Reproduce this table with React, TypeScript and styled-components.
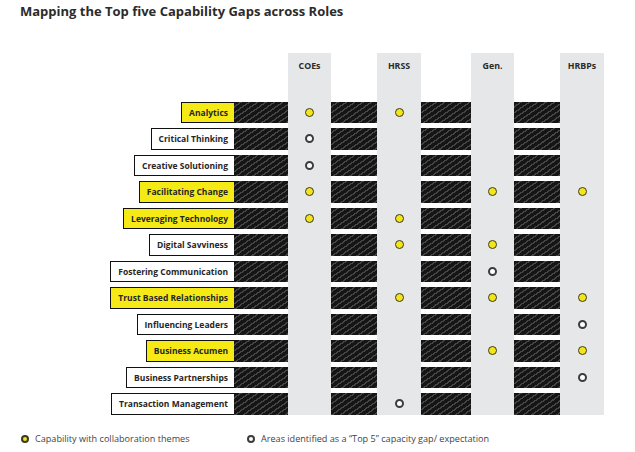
import React from "react";
import styled, { createGlobalStyle } from "styled-components";

const GlobalStyle = createGlobalStyle`
  html, body { margin: 0; padding: 0; background: #ffffff; }
  body { font-family: "Open Sans", "Liberation Sans", sans-serif; color: #222; }
`;

type Mark = "y" | "g" | null;

const ROW_H = 21.5;
const ROW_GAP = 5;
const HEAD_H = 48.5;

const roles = [
  { name: "COEs", width: 43, hatch: 54 },
  { name: "HRSS", width: 44, hatch: 46 },
  { name: "Gen.", width: 43, hatch: 50 },
  { name: "HRBPs", width: 44, hatch: 46 },
];

const rows: { label: string; hl: boolean; marks: Mark[] }[] = [
  { label: "Analytics", hl: true, marks: ["y", "y", null, null] },
  { label: "Critical Thinking", hl: false, marks: ["g", null, null, null] },
  { label: "Creative Solutioning", hl: false, marks: ["g", null, null, null] },
  { label: "Facilitating Change", hl: true, marks: ["y", null, "y", "y"] },
  { label: "Leveraging Technology", hl: true, marks: ["y", "y", null, null] },
  { label: "Digital Savviness", hl: false, marks: [null, "y", "y", null] },
  { label: "Fostering Communication", hl: false, marks: [null, null, "g", null] },
  { label: "Trust Based Relationships", hl: true, marks: [null, "y", "y", "y"] },
  { label: "Influencing Leaders", hl: false, marks: [null, null, null, "g"] },
  { label: "Business Acumen", hl: true, marks: [null, null, "y", "y"] },
  { label: "Business Partnerships", hl: false, marks: [null, null, null, "g"] },
  { label: "Transaction Management", hl: false, marks: [null, "g", null, null] },
];

const Page = styled.div`
  width: 635px;
  height: 452px;
  overflow: hidden;
`;

const Title = styled.h1`
  margin: 0;
  padding: 3px 0 0 20px;
  font-size: 13px;
  line-height: 17px;
  font-weight: 700;
  color: #2b2b2b;
`;

const Chart = styled.div`
  display: flex;
  margin-top: 33px;
`;

const Column = styled.div<{ $w: number; $grey?: boolean }>`
  width: ${(p) => p.$w}px;
  flex: none;
  display: flex;
  flex-direction: column;
  gap: ${ROW_GAP}px;
  background: ${(p) => (p.$grey ? "#e6e7e8" : "transparent")};
`;

const LabelColumn = styled(Column)`
  align-items: flex-end;
`;

const Head = styled.div`
  height: ${HEAD_H - ROW_GAP}px;
  padding-top: 8px;
  box-sizing: border-box;
  text-align: center;
  font-size: 8.8px;
  line-height: 11px;
  font-weight: 700;
  color: #2b2b2b;
`;

const LabelBox = styled.div<{ $hl: boolean }>`
  height: ${ROW_H}px;
  box-sizing: border-box;
  display: flex;
  align-items: center;
  padding: 0 6px 0 7px;
  border: 1.5px solid #111;
  border-right: none;
  background: ${(p) => (p.$hl ? "#f6ea16" : "#ffffff")};
  font-size: 8.5px;
  font-weight: 700;
  color: #262626;
  white-space: nowrap;
`;

const HatchBar = styled.div`
  height: ${ROW_H}px;
  background-color: #151515;
  background-image: repeating-linear-gradient(
    145deg,
    #151515 0px,
    #151515 3.4px,
    #454545 3.4px,
    #454545 4.8px
  );
`;

const Cell = styled.div`
  height: ${ROW_H}px;
  display: flex;
  align-items: center;
  justify-content: center;
`;

const Dot = styled.span<{ $kind: "y" | "g" }>`
  width: 9px;
  height: 9px;
  box-sizing: border-box;
  border-radius: 50%;
  background: ${(p) => (p.$kind === "y" ? "#f2e51c" : "#ffffff")};
  border: ${(p) => (p.$kind === "y" ? "1.6px solid #3a3a22" : "2px solid #3c3c3c")};
`;

const Legend = styled.div`
  display: flex;
  align-items: center;
  margin-top: 18px;
  padding-left: 21px;
`;

const LegendItem = styled.div<{ $w?: number }>`
  display: flex;
  align-items: center;
  gap: 6px;
  width: ${(p) => (p.$w ? `${p.$w}px` : "auto")};
  font-size: 9.1px;
  line-height: 12px;
  color: #3f3f3f;
`;

const LegendDot = styled(Dot)`
  width: 8px;
  height: 8px;
  border-width: 2px;
`;

export default function App() {
  return (
    <Page>
      <GlobalStyle />
      <Title>Mapping the Top five Capability Gaps across Roles</Title>
      <Chart>
        <LabelColumn $w={234}>
          <Head />
          {rows.map((r) => (
            <LabelBox key={r.label} $hl={r.hl}>
              {r.label}
            </LabelBox>
          ))}
        </LabelColumn>
        {roles.map((role, ri) => (
          <React.Fragment key={role.name}>
            <Column $w={role.hatch}>
              <Head />
              {rows.map((r) => (
                <HatchBar key={r.label} />
              ))}
            </Column>
            <Column $w={role.width} $grey>
              <Head>{role.name}</Head>
              {rows.map((r) => (
                <Cell key={r.label}>
                  {r.marks[ri] && <Dot $kind={r.marks[ri] as "y" | "g"} />}
                </Cell>
              ))}
            </Column>
          </React.Fragment>
        ))}
      </Chart>
      <Legend>
        <LegendItem $w={226}>
          <LegendDot $kind="y" />
          Capability with collaboration themes
        </LegendItem>
        <LegendItem>
          <LegendDot $kind="g" />
          Areas identified as a “Top 5” capacity gap/ expectation
        </LegendItem>
      </Legend>
    </Page>
  );
}
